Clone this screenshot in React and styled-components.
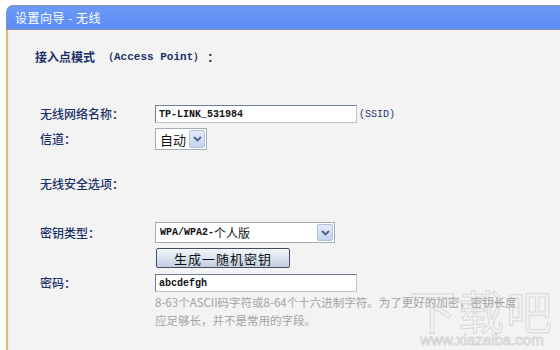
import React from "react";
import styled, { createGlobalStyle } from "styled-components";

const GlobalStyle = createGlobalStyle`
  html, body {
    margin: 0;
    padding: 0;
    background: #ffffff;
    width: 560px;
    height: 350px;
    overflow: hidden;
  }
`;

const Page = styled.div`
  position: relative;
  width: 560px;
  height: 350px;
  padding: 5px 0 0 6px;
  box-sizing: border-box;
  font-family: "Noto Sans CJK SC", "Liberation Sans", sans-serif;
  font-size: 12px;
  overflow: hidden;
`;

const Panel = styled.div`
  display: flex;
  flex-direction: column;
  height: 100%;
`;

const Header = styled.div`
  height: 23px;
  display: flex;
  align-items: center;
  padding-left: 8px;
  background: linear-gradient(#6b9af8, #5c8cf5);
  border-top: 1px solid #8793a8;
  border-bottom: 1px solid #8793a8;
  border-left: 1px solid #7d94c0;
  border-top-left-radius: 7px;
  color: #ffffff;
  font-size: 12px;
  letter-spacing: 0.5px;
`;

const Body = styled.div`
  flex: 1;
  background: #f3f3f3;
  border-left: 2px solid #f0b477;
  box-shadow: inset 2px 0 0 #e8eef6;
  padding: 20px 0 0 27px;
  display: flex;
  flex-direction: column;
  color: #1a3068;
  font-weight: 500;
`;

const SectionTitle = styled.div`
  height: 14px;
  line-height: 14px;
  margin-top: ${p => p.$top}px;
  margin-left: ${p => p.$indent || 0}px;
  font-weight: ${p => (p.$bold ? 700 : 500)};
  display: flex;
  align-items: center;
`;

const Latin = styled.span`
  font-family: "Liberation Mono", monospace;
  font-weight: bold;
  font-size: 11px;
  margin: 0 3px 0 8px;
`;

const Row = styled.div`
  display: grid;
  grid-template-columns: 115px auto auto;
  justify-content: start;
  align-items: center;
  margin-top: ${p => p.$top}px;
  margin-left: 5px;
  height: ${p => p.$h}px;
`;

const Label = styled.div`
  line-height: 14px;
  margin-top: ${p => p.$shift || 0}px;
`;

const TextInput = styled.div`
  width: 202px;
  height: 18px;
  box-sizing: border-box;
  background: #ffffff;
  border: 1px solid #6f7f99;
  border-right-color: #b9c2d0;
  border-bottom-color: #b9c2d0;
  padding-left: 3px;
  display: flex;
  align-items: center;
  font-family: "Liberation Mono", monospace;
  font-size: 10px;
  font-weight: bold;
  color: #111111;
`;

const Suffix = styled.span`
  font-family: "Liberation Mono", monospace;
  font-size: 10px;
  color: #1d336e;
  margin-left: 2px;
`;

const Select = styled.div`
  width: ${p => p.$w}px;
  height: ${p => p.$h}px;
  box-sizing: border-box;
  background: #ffffff;
  border: 1px solid #a5acb5;
  display: flex;
  align-items: center;
  justify-content: space-between;
  padding: 0 1px 0 4px;
  color: #111111;
  font-weight: 400;
  font-size: ${p => p.$fs}px;
`;

const SelectText = styled.span`
  display: flex;
  align-items: center;
`;

const Mono = styled.span`
  font-family: "Liberation Mono", monospace;
  font-weight: bold;
  font-size: 10px;
`;

const ArrowBox = styled.div`
  width: 16px;
  height: ${p => p.$h}px;
  box-sizing: border-box;
  border: 1px solid #b3c2dc;
  border-radius: 2px;
  background: linear-gradient(#e4ecfa, #c4d3ee);
  display: flex;
  align-items: center;
  justify-content: center;
`;

const Button = styled.div`
  width: 134px;
  height: 20px;
  box-sizing: border-box;
  margin-left: 1px;
  border: 1px solid #3f4d66;
  border-radius: 2px;
  background: linear-gradient(#f4f7fc, #d8e1ee 55%, #c3cfe1);
  display: flex;
  align-items: center;
  justify-content: center;
  font-size: 13px;
  font-weight: 400;
  color: #111111;
  letter-spacing: 1px;
`;

const Hint = styled.div`
  margin-top: 1px;
  margin-left: 120px;
  color: #a3a3a3;
  font-size: 11.5px;
  font-weight: 400;
  line-height: 18px;
  white-space: nowrap;
`;

const Watermark = styled.div`
  position: absolute;
  right: 6px;
  bottom: 2px;
  display: flex;
  flex-direction: column;
  align-items: center;
  color: transparent;
  -webkit-text-stroke: 1px rgba(160, 160, 160, 0.35);
  pointer-events: none;
`;

const MarkBig = styled.div`
  font-family: "Noto Sans CJK SC", sans-serif;
  font-size: 46px;
  line-height: 46px;
  letter-spacing: 2px;
`;

const MarkSmall = styled.div`
  font-family: "Liberation Sans", sans-serif;
  font-size: 15px;
  line-height: 16px;
`;

const Chevron = () => (
  <svg width="9" height="6" viewBox="0 0 9 6">
    <polyline points="1,1 4.5,4.5 8,1" fill="none" stroke="#4d6185" strokeWidth="1.8" />
  </svg>
);

export default function App() {
  return (
    <>
      <GlobalStyle />
      <Page>
        <Panel>
          <Header>设置向导 - 无线</Header>
          <Body>
            <SectionTitle $top={0} $indent={0} $bold>
              接入点模式<Latin>（Access Point）</Latin>：
            </SectionTitle>

            <Row $top={41} $h={18}>
              <Label>无线网络名称：</Label>
              <TextInput>TP-LINK_531984</TextInput>
              <Suffix>(SSID)</Suffix>
            </Row>

            <Row $top={5} $h={22}>
              <Label $shift={-1}>信道：</Label>
              <Select $w={52} $h={22} $fs={13}>
                <SelectText>自动</SelectText>
                <ArrowBox $h={18}>
                  <Chevron />
                </ArrowBox>
              </Select>
            </Row>

            <SectionTitle $top={27} $indent={5}>
              无线安全选项：
            </SectionTitle>

            <Row $top={31} $h={21}>
              <Label>密钥类型：</Label>
              <Select $w={180} $h={21} $fs={12}>
                <SelectText>
                  <Mono>WPA/WPA2-</Mono>个人版
                </SelectText>
                <ArrowBox $h={17}>
                  <Chevron />
                </ArrowBox>
              </Select>
            </Row>

            <Row $top={5} $h={20}>
              <span />
              <Button>生成一随机密钥</Button>
            </Row>

            <Row $top={6} $h={18}>
              <Label>密码：</Label>
              <TextInput>abcdefgh</TextInput>
            </Row>

            <Hint>
              <div>8-63个ASCII码字符或8-64个十六进制字符。为了更好的加密，密钥长度</div>
              <div>应足够长，并不是常用的字段。</div>
            </Hint>
          </Body>
        </Panel>
        <Watermark>
          <MarkBig>下载吧</MarkBig>
          <MarkSmall>www.xiazaiba.com</MarkSmall>
        </Watermark>
      </Page>
    </>
  );
}
